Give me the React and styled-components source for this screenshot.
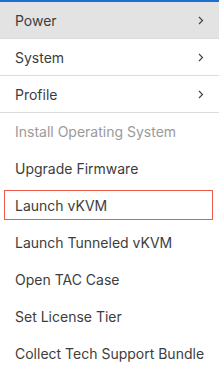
import React from "react";
import styled, { createGlobalStyle, css } from "styled-components";

const GlobalStyle = createGlobalStyle`
  html, body {
    margin: 0;
    padding: 0;
    background: #ffffff;
  }
  body {
    font-family: Inter, "Noto Sans", sans-serif;
  }
`;

const Menu = styled.ul`
  list-style: none;
  margin: 0;
  padding: 0;
  width: 219px;
  border-top: 2px solid #1f6fd1;
  background: #ffffff;
`;

const Item = styled.li`
  position: relative;
  box-sizing: border-box;
  height: 37px;
  display: flex;
  align-items: center;
  justify-content: space-between;
  padding: 0 15px 0 15px;
  font-size: 14px;
  white-space: nowrap;
  color: ${({ $disabled }) => ($disabled ? "#9a9a9a" : "#3d3d3d")};
  background: ${({ $active }) => ($active ? "#e3e3e3" : "transparent")};
  ${({ $divided }) =>
    $divided &&
    css`
      border-bottom: 1px solid #dcdcdc;
    `};
  ${({ $focused }) =>
    $focused &&
    css`
      &::after {
        content: "";
        position: absolute;
        top: 3px;
        bottom: 4px;
        left: 4px;
        right: 6px;
        border: 1.5px solid #ec5a4c;
      }
    `};
`;

const Label = styled.span`
  flex: none;
`;

const Chevron = () => (
  <svg width="6" height="9" viewBox="0 0 6 9" fill="none">
    <path d="M1 1l3.5 3.5L1 8" stroke="#444" strokeWidth="1.2" />
  </svg>
);

const items = [
  { label: "Power", sub: true, active: true, divided: true },
  { label: "System", sub: true, divided: true },
  { label: "Profile", sub: true, divided: true },
  { label: "Install Operating System", disabled: true },
  { label: "Upgrade Firmware" },
  { label: "Launch vKVM", focused: true },
  { label: "Launch Tunneled vKVM" },
  { label: "Open TAC Case" },
  { label: "Set License Tier" },
  { label: "Collect Tech Support Bundle" },
];

const App = () => (
  <>
    <GlobalStyle />
    <Menu>
      {items.map((it) => (
        <Item
          key={it.label}
          $active={it.active}
          $divided={it.divided}
          $disabled={it.disabled}
          $focused={it.focused}
        >
          <Label>{it.label}</Label>
          {it.sub && <Chevron />}
        </Item>
      ))}
    </Menu>
  </>
);

export default App;
